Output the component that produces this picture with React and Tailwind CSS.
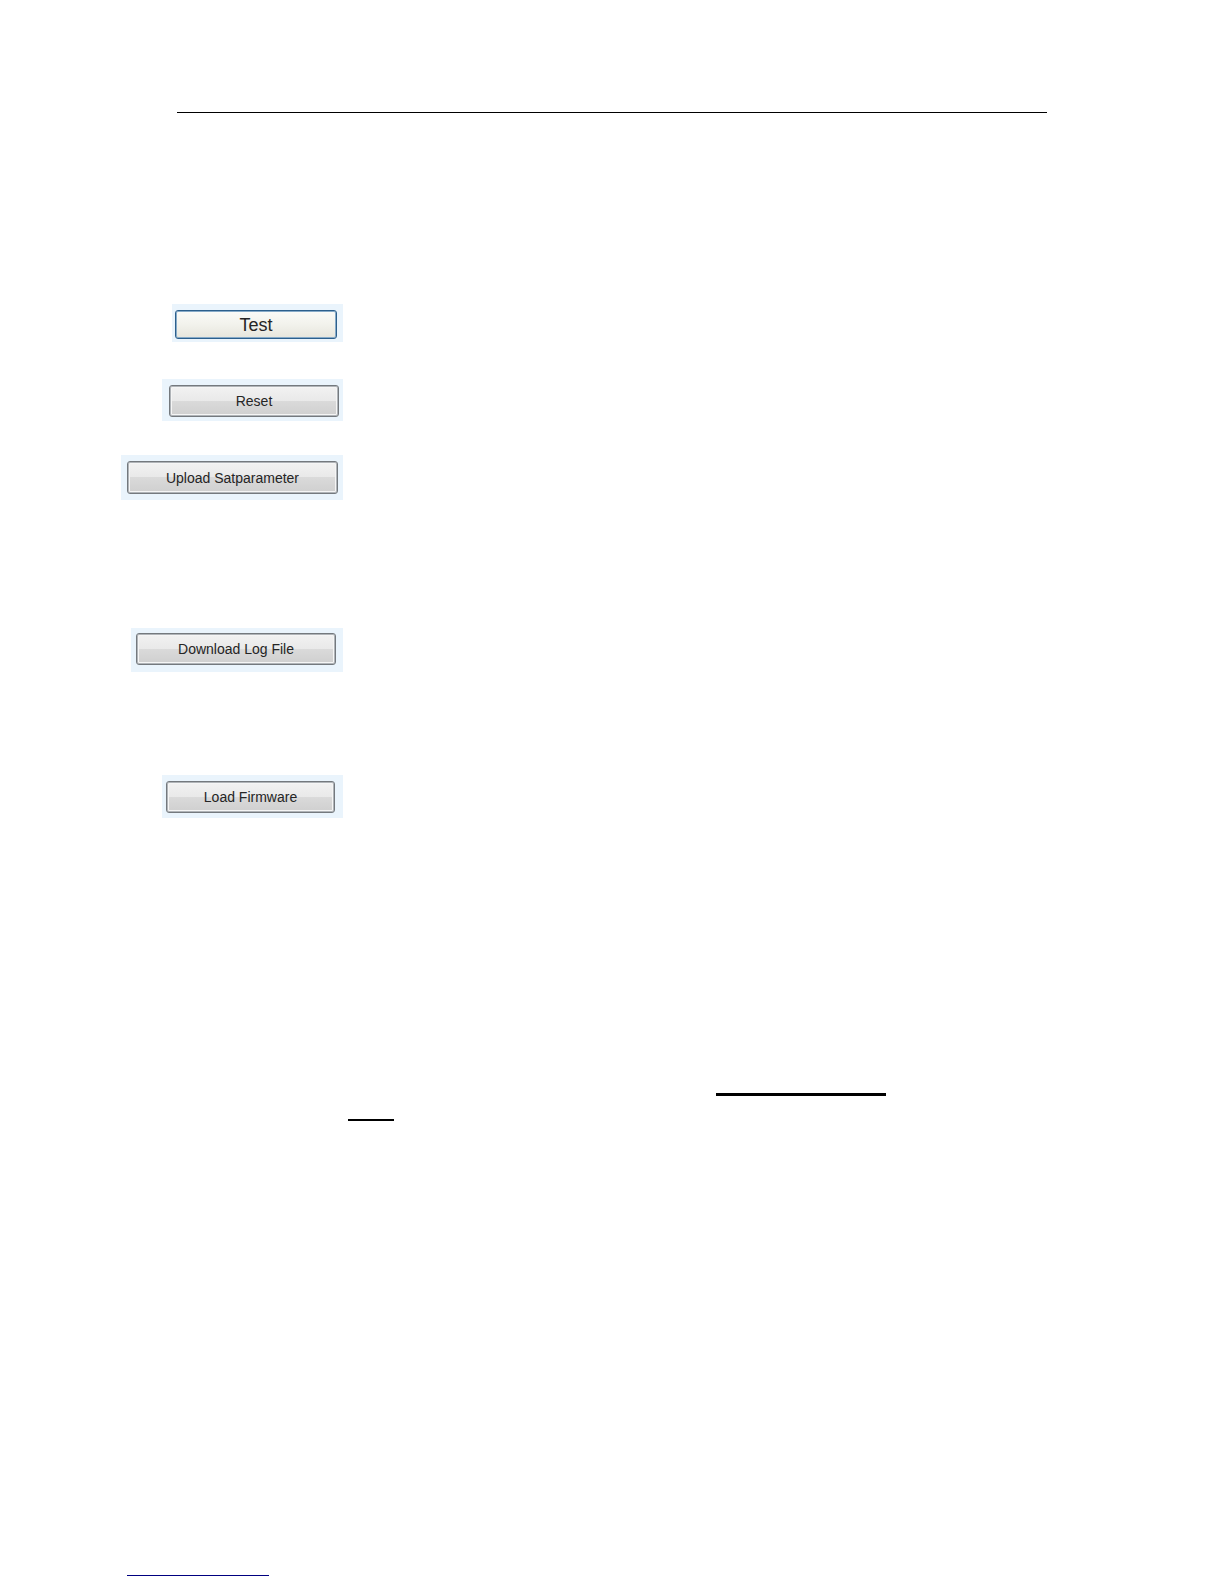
import React from 'react';

const greyFace =
  'border-[#74797e] bg-[linear-gradient(#f2f2f2,#e9e9e9_50%,#dadada_50%,#cfcfcf)] text-[14px] shadow-[inset_0_0_0_1px_#b0b4b8,inset_0_0_0_2px_#f5f5f5]';
const focusFace =
  'border-[#2c5f8c] bg-linear-to-b from-[#fbfbf8] via-[#f2f2ec] to-[#e6e5dc] text-[18px] shadow-[inset_0_0_0_1px_#86aac8]';

const buttons = [
  {
    label: 'Test',
    frame: 'mt-[191px] pt-[6px] pr-[6px] pb-[3px] pl-[3px]',
    face: `h-[29px] w-[162px] ${focusFace}`,
  },
  {
    label: 'Reset',
    frame: 'mt-[37px] pt-[6px] pr-[4px] pb-[4px] pl-[7px]',
    face: `h-[32px] w-[170px] ${greyFace}`,
  },
  {
    label: 'Upload Satparameter',
    frame: 'mt-[34px] pt-[6px] pr-[5px] pb-[6px] pl-[6px]',
    face: `h-[33px] w-[211px] ${greyFace}`,
  },
  {
    label: 'Download Log File',
    frame: 'mt-[128px] pt-[5px] pr-[7px] pb-[7px] pl-[5px]',
    face: `h-[32px] w-[200px] ${greyFace}`,
  },
  {
    label: 'Load Firmware',
    frame: 'mt-[103px] pt-[6px] pr-[8px] pb-[5px] pl-[4px]',
    face: `h-[32px] w-[169px] ${greyFace}`,
  },
];

export default function App() {
  return (
    <main className='flow-root bg-white font-["Liberation_Sans",Arial,sans-serif] text-[#252525]'>
      <hr className="mx-[177px] mt-[112px] border-t border-black" />

      {/* Function buttons, lined up on their right edge */}
      <div className="flex w-[343px] flex-col items-end">
        {buttons.map((button) => (
          <div key={button.label} className={`bg-[#eaf4fc] ${button.frame}`}>
            <button
              type="button"
              className={`flex items-center justify-center rounded-[3px] border leading-5 whitespace-nowrap ${button.face}`}
            >
              {button.label}
            </button>
          </div>
        ))}
      </div>

      <hr className="mt-[275px] mr-[338px] ml-[716px] border-t-[3px] border-black" />
      <hr className="mt-[23px] ml-[348px] w-[46px] border-t-2 border-black" />
      <hr className="mt-[454px] mb-[8px] ml-[127px] w-[142px] border-t border-[#000080]" />
    </main>
  );
}
